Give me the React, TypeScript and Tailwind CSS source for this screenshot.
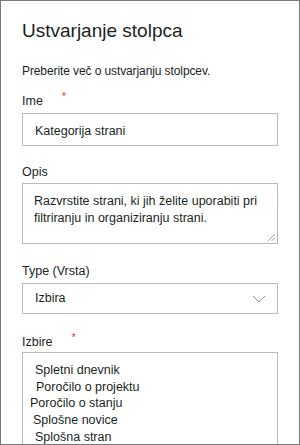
import React from 'react';

/** Oznaka polja z obvezno zvezdico */
function FieldLabel({ text, required }: { text: string; required?: boolean }) {
  return (
    <div className="flex items-start h-4 leading-4 text-[12.5px] text-[#201f1e]">
      <span>{text}</span>
      {required && (
        <span className="ml-[19px] -mt-[3px] text-[11px] leading-3 text-[#d4464c]">*</span>
      )}
    </div>
  );
}

const CHOICES = [
  { label: 'Spletni dnevnik', indent: 'pl-[12px]' },
  { label: 'Poročilo o projektu', indent: 'pl-[13px]' },
  { label: 'Poročilo o stanju', indent: 'pl-[7px]' },
  { label: 'Splošne novice', indent: 'pl-[10px]' },
  { label: 'Splošna stran', indent: 'pl-[12px]' },
];

export default function App() {
  return (
    <div
      className="w-[300px] h-[445px] overflow-hidden bg-white border border-[#7a7a7a] px-[21px] pt-[18px] text-[#201f1e]"
      style={{ fontFamily: '"Liberation Sans", Arial, sans-serif' }}
    >
      {/* naslov */}
      <h1 className="text-[19px] leading-6 font-normal">Ustvarjanje stolpca</h1>

      <p className="mt-5 text-[12px] leading-4 tracking-[-0.1px]">
        Preberite več o ustvarjanju stolpcev.
      </p>

      {/* Ime */}
      <div className="mt-[14px]">
        <FieldLabel text="Ime" required />
        <div className="mt-1 h-[33px] border border-[#bcbcbc] pl-[12px] pt-[9px] text-[12.5px] leading-4">
          Kategorija strani
        </div>
      </div>

      {/* Opis */}
      <div className="mt-[18px]">
        <FieldLabel text="Opis" />
        <div className="relative mt-[3px] h-[61px] border border-[#bcbcbc] pl-[11px] pt-[9px] text-[12.5px] leading-[17px]">
          <div>Razvrstite strani, ki jih želite uporabiti pri</div>
          <div>filtriranju in organiziranju strani.</div>
          {/* ročaj za spreminjanje velikosti */}
          <svg className="absolute right-[1px] bottom-[1px]" width={9} height={9} viewBox="0 0 9 9" aria-hidden="true">
            <line x1={8} y1={1} x2={1} y2={8} stroke="#a8a8a8" strokeWidth={1} />
            <line x1={8} y1={4.5} x2={4.5} y2={8} stroke="#a8a8a8" strokeWidth={1} />
          </svg>
        </div>
      </div>

      {/* Type (Vrsta) */}
      <div className="mt-[19px]">
        <FieldLabel text="Type (Vrsta)" />
        <div className="mt-1 h-[31px] border border-[#bcbcbc] pl-[12px] pr-[11px] flex items-center justify-between text-[12.5px]">
          <span>Izbira</span>
          <svg width={14} height={8} viewBox="0 0 14 8" fill="none" aria-hidden="true">
            <path d="M1 1l6 6 6-6" stroke="#8f8f8f" strokeWidth={1} />
          </svg>
        </div>
      </div>

      {/* Izbire */}
      <div className="mt-5">
        <FieldLabel text="Izbire" required />
        <div className="mt-[2px] h-[120px] border border-[#bcbcbc] pt-[9px] text-[12.5px] leading-[16.7px]">
          {CHOICES.map((c) => (
            <div key={c.label} className={c.indent}>
              {c.label}
            </div>
          ))}
        </div>
      </div>
    </div>
  );
}
